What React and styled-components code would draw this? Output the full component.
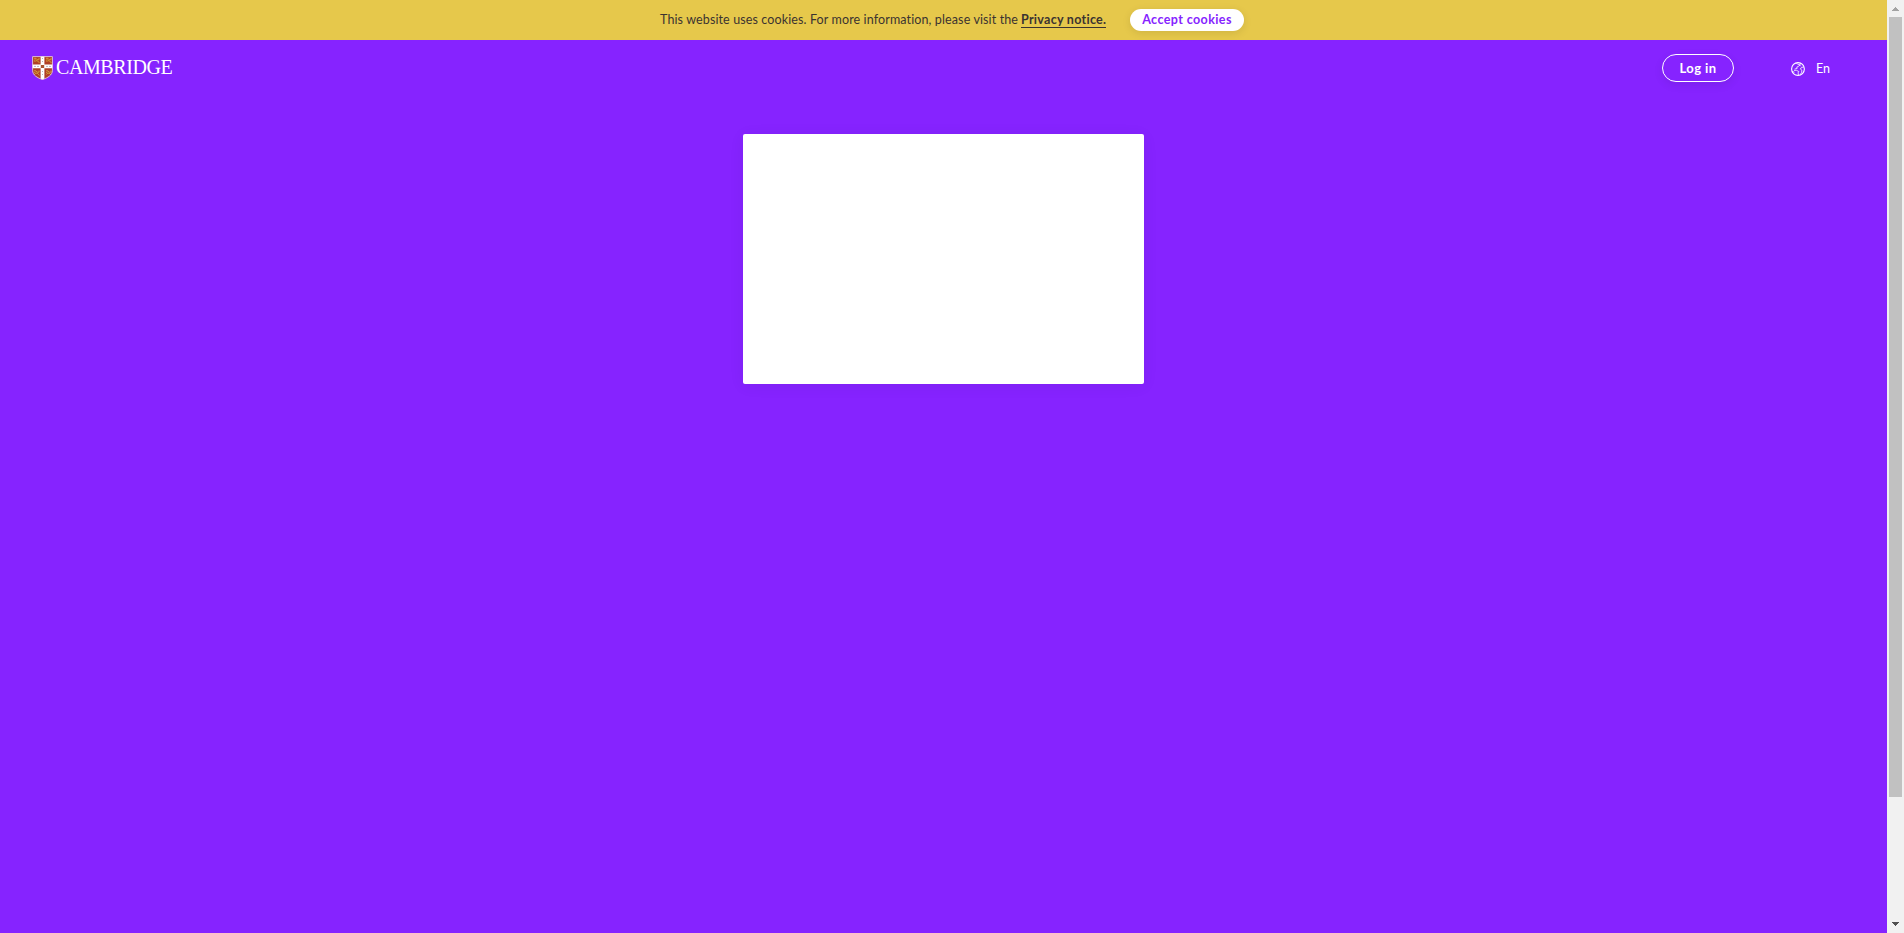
import React from "react";
import styled, { createGlobalStyle } from "styled-components";

const Global = createGlobalStyle`
  * { box-sizing: border-box; }
  html, body { margin: 0; height: 100%; overflow: hidden; }
  body { font-family: Lato, "Open Sans", sans-serif; background: #8623ff; }
`;

const Window = styled.div`
  display: flex;
  width: 100%;
  height: 100vh;
`;

const Page = styled.div`
  flex: 1;
  display: flex;
  flex-direction: column;
  background: #8623ff;
`;

const CookieBar = styled.div`
  height: 40px;
  padding: 0 0 0 660px;
  display: flex;
  align-items: center;
  background: #e6c84b;
  color: #3b3331;
  font-size: 12.5px;
  white-space: nowrap;
`;

const Notice = styled.span`
  width: 361px;
  line-height: 20px;
  letter-spacing: 0.12px;
`;

const PrivacyLink = styled.a`
  width: 85px;
  height: 16px;
  line-height: 16px;
  border-bottom: 1px solid #3b3331;
  font-weight: 700;
  letter-spacing: 0.28px;
`;

const AcceptButton = styled.button`
  width: 114px;
  height: 22px;
  margin-left: 24px;
  padding: 0;
  border: 0;
  border-radius: 11px;
  background: #fff;
  box-shadow: 0 2px 8px rgba(0, 0, 0, 0.1);
  color: #8623ff;
  font: 700 12.5px/22px Lato, sans-serif;
  letter-spacing: 0.4px;
`;

const Header = styled.header`
  height: 56px;
  display: flex;
  align-items: center;
  padding: 0 57px 0 32px;
  color: #fff;
`;

const Brand = styled.a`
  display: flex;
  align-items: center;
  flex: 1;
`;

const Wordmark = styled.span`
  margin: -2px 0 0 3px;
  font: 20px/24px "Liberation Serif", serif;
  letter-spacing: -0.4px;
`;

const LoginButton = styled.button`
  width: 72px;
  height: 28px;
  margin-right: 57px;
  padding: 0;
  border: 1px solid #fff;
  border-radius: 14px;
  background: transparent;
  box-shadow: 0 3px 10px rgba(0, 0, 0, 0.08);
  color: #fff;
  font: 700 13px/24px Lato, sans-serif;
  letter-spacing: 0.4px;
`;

const Language = styled.div`
  display: flex;
  align-items: center;
  gap: 11px;
  width: 39px;
  margin-top: 2px;
  font-size: 12.5px;
  line-height: 16px;
`;

const Card = styled.main`
  width: 401px;
  height: 250px;
  margin: 38px auto 0;
  border-radius: 2px;
  background: #fff;
  box-shadow: 0 2px 16px rgba(0, 0, 0, 0.06);
`;

const Scrollbar = styled.div`
  width: 17px;
  display: flex;
  flex-direction: column;
  align-items: center;
  background: #f1f1f1;
`;

const ScrollArrow = styled.svg`
  width: 17px;
  height: 17px;
  display: block;
`;

const Thumb = styled.div`
  width: 13px;
  height: 780px;
  margin-bottom: auto;
  background: #c1c1c1;
`;

const Lion = ({ x, y }) => (
  <g transform={`translate(${x} ${y})`} fill="none" stroke="#d19b35" strokeWidth="1">
    <path d="M1 1.3h2l1 1.4h2V1M1.5 5l1.4-1.5 2 .6L6.4 6M1 3.4l1.5-.8" />
  </g>
);

const Shield = () => (
  <svg width="21" height="24" viewBox="0 0 21 24">
    <defs>
      <clipPath id="shield">
        <path d="M.6.6h19.8v13.8c0 4.7-4.7 7.5-9.9 9.1-5.2-1.6-9.9-4.4-9.9-9.1z" />
      </clipPath>
    </defs>
    <g clipPath="url(#shield)">
      <path fill="#b04025" d="M0 0h21v24H0z" />
      <Lion x={1} y={1} />
      <Lion x={13} y={1} />
      <Lion x={1} y={13.5} />
      <Lion x={13} y={13.5} />
      <path fill="#fff" d="M8.6 0h3.8v8.5H21v3.8h-8.6V24H8.6V12.3H0V8.5h8.6z" />
      <path d="M2 10.4h2m1 0h2m7 0h2m1 0h2M10.5 2v1m0 2v1m0 9v1m0 2v1" stroke="#aaa0ad" strokeWidth=".8" />
      <path fill="#a8532f" d="M8.8 9h3.4v3H8.8z" />
    </g>
    <path
      d="M.6.6h19.8v13.8c0 4.7-4.7 7.5-9.9 9.1-5.2-1.6-9.9-4.4-9.9-9.1z"
      fill="none" stroke="#eadcea" strokeWidth=".8"
    />
  </svg>
);

const Globe = () => (
  <svg width="14" height="14" viewBox="0 0 14 14" fill="none" stroke="#fff" strokeLinejoin="round">
    <circle cx="7" cy="7" r="6.4" strokeWidth="1.1" />
    <path
      d="M5.4.9 6.9 2.5 9 3 7.3 4.5 5.8 5l.4 1.4-2.6.7M9.8 1.4 8.7 3l1 1.2M12.9 5l-2.4.4-1.1 1.7 1.6 1.2-.5 2.3-1.2 2M3 8.4l2.4-.1 2.4 1.2-.7 1.4.4 2M1.3 9.5l2.2.7"
      strokeWidth=".8"
    />
  </svg>
);

export default function App() {
  return (
    <Window>
      <Global />
      <Page>
        <CookieBar>
          <Notice>This website uses cookies. For more information, please visit the </Notice>
          <PrivacyLink>Privacy notice.</PrivacyLink>
          <AcceptButton>Accept cookies</AcceptButton>
        </CookieBar>
        <Header>
          <Brand>
            <Shield />
            <Wordmark>CAMBRIDGE</Wordmark>
          </Brand>
          <LoginButton>Log in</LoginButton>
          <Language>
            <Globe />
            <span>En</span>
          </Language>
        </Header>
        <Card />
      </Page>
      <Scrollbar>
        <ScrollArrow viewBox="0 0 17 17" shapeRendering="crispEdges">
          <path fill="#a3a3a3" d="M8 7h1v1h1v1h1v1h1v1H5v-1h1V9h1V8h1z" />
        </ScrollArrow>
        <Thumb />
        <ScrollArrow viewBox="0 0 17 17" shapeRendering="crispEdges">
          <path fill="#505050" d="M5 6h7v1h-1v1h-1v1H9v1H8V9H7V8H6V7H5z" />
        </ScrollArrow>
      </Scrollbar>
    </Window>
  );
}
